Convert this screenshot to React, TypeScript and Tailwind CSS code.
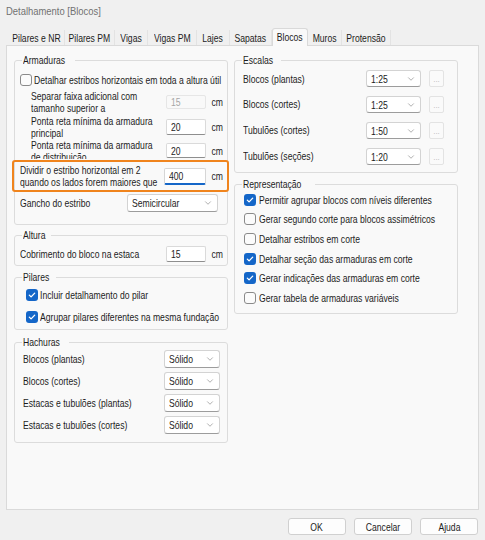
import { ChevronDown } from 'lucide-react';
import type { ReactNode } from 'react';

const tabs = [
  { label: 'Pilares e NR', w: 'w-[57px]' },
  { label: 'Pilares PM', w: 'w-[50px]' },
  { label: 'Vigas', w: 'w-[33px]' },
  { label: 'Vigas PM', w: 'w-[49px]' },
  { label: 'Lajes', w: 'w-[33px]' },
  { label: 'Sapatas', w: 'w-[42px]' },
  { label: 'Blocos', w: 'w-[36px]' },
  { label: 'Muros', w: 'w-[34px]' },
  { label: 'Protensão', w: 'w-[49px]' },
];

const escalas = [
  { label: 'Blocos (plantas)', value: '1:25', h: 'h-[25px]' },
  { label: 'Blocos (cortes)', value: '1:25', h: 'h-[26px]' },
  { label: 'Tubulões (cortes)', value: '1:50', h: 'h-[26px]' },
  { label: 'Tubulões (seções)', value: '1:20', h: 'h-[26px]' },
];

const representacao = [
  { label: 'Permitir agrupar blocos com níveis diferentes', on: true },
  { label: 'Gerar segundo corte para blocos assimétricos', on: false },
  { label: 'Detalhar estribos em corte', on: false },
  { label: 'Detalhar seção das armaduras em corte', on: true },
  { label: 'Gerar indicações das armaduras em corte', on: true },
  { label: 'Gerar tabela de armaduras variáveis', on: false },
];

const hachuras = ['Blocos (plantas)', 'Blocos (cortes)', 'Estacas e tubulões (plantas)', 'Estacas e tubulões (cortes)'];

// texto estreito, no estilo da fonte do diálogo
function T({ children, className = 'origin-left' }: { children: ReactNode; className?: string }) {
  return <span className={`inline-block scale-x-[0.82] ${className}`}>{children}</span>;
}

function CheckBox({ on = false }: { on?: boolean }) {
  if (on) {
    return (
      <span className="w-[12px] h-[12px] shrink-0 rounded-[3px] bg-[#1466c8] flex items-center justify-center">
        <svg width="8" height="8" viewBox="0 0 8 8">
          <path d="M1.3 4.1 3.1 5.9 6.7 2.1" fill="none" stroke="#fff" strokeWidth="1.3" strokeLinecap="round" strokeLinejoin="round" />
        </svg>
      </span>
    );
  }
  return <span className="w-[12px] h-[12px] shrink-0 rounded-[3px] border border-[#8a8a8a] bg-[#fbfbfb]" />;
}

function Combo({ value, className = '' }: { value: string; className?: string }) {
  return (
    <div className={`flex items-center justify-between shrink-0 bg-white border border-[#d3d3d3] border-b-[#9c9c9c] rounded-[3px] pl-[4px] pr-[4px] ${className}`}>
      <T>{value}</T>
      <ChevronDown size={10} strokeWidth={1.3} className="text-[#6c6c6c]" />
    </div>
  );
}

function Field({ value, className = '', disabled = false }: { value: string; className?: string; disabled?: boolean }) {
  return (
    <div
      className={`flex items-center shrink-0 pl-[4px] rounded-[2px] border ${
        disabled ? 'bg-[#f9f9f9] border-[#e6e6e6] text-[#a5a5a5]' : 'bg-white border-[#dadada] border-b-[#8e8e8e]'
      } ${className}`}
    >
      <T>{value}</T>
    </div>
  );
}

function Cm({ className = '' }: { className?: string }) {
  return (
    <span className={`w-[17px] shrink-0 text-right ${className}`}>
      <T className="origin-right">cm</T>
    </span>
  );
}

function Group({ title, className = '', children }: { title: string; className?: string; children: ReactNode }) {
  return (
    <fieldset className={`min-w-0 border border-[#dcdcdc] rounded-[3px] ${className}`}>
      <legend className="ml-[7px] px-[1px] leading-[12px]">
        <T>{title}</T>
      </legend>
      {children}
    </fieldset>
  );
}

export default function App() {
  return (
    <div className="w-[485px] h-[540px] overflow-hidden flex flex-col whitespace-nowrap bg-[#f0f0f0] text-[#1c1c1c] text-[10.5px] leading-[12px] font-['Liberation_Sans',Arial,sans-serif]">
      <div className="h-[28px] pl-[6px] pt-[4px] text-[11.5px] leading-[14px] text-[#727272]">
        <T>Detalhamento [Blocos]</T>
      </div>

      {/* abas */}
      <div className="h-[17px] flex items-end pl-[8px]">
        {tabs.map((t) =>
          t.label === 'Blocos' ? (
            <div
              key={t.label}
              className={`${t.w} h-[18px] -mb-[1px] relative z-10 flex items-center justify-center pb-[2px] bg-[#f9f9f9] border border-b-0 border-[#d9d9d9] rounded-t-[3px]`}
            >
              <T className="origin-center">{t.label}</T>
            </div>
          ) : (
            <div key={t.label} className={`${t.w} h-[15px] flex items-center justify-center border-r border-[#e3e3e3]`}>
              <T className="origin-center">{t.label}</T>
            </div>
          )
        )}
      </div>

      <div className="mx-[6px] h-[465px] flex gap-[6px] pl-[7px] pt-[8px] bg-[#f9f9f9] border border-[#dadada]">
        {/* coluna esquerda */}
        <div className="w-[214px] shrink-0 flex flex-col">
          <Group title="Armaduras" className="pt-[4px] pb-[10px]">
            <div className="h-[19px] flex items-center gap-[2px] pl-[5px]">
              <CheckBox />
              <T>Detalhar estribos horizontais em toda a altura útil</T>
            </div>
            <div className="h-[25px] flex items-center pl-[16px] pr-[4px]">
              <span className="flex-1 min-w-0">
                <T>Separar faixa adicional com<br />tamanho superior a</T>
              </span>
              <Field value="15" disabled className="w-[40px] h-[14px]" />
              <Cm />
            </div>
            <div className="h-[25px] flex items-center pl-[16px] pr-[4px]">
              <span className="flex-1 min-w-0">
                <T>Ponta reta mínima da armadura<br />principal</T>
              </span>
              <Field value="20" className="w-[40px] h-[16px]" />
              <Cm />
            </div>
            <div className="h-[21px] flex items-center pl-[16px] pr-[4px]">
              <span className="flex-1 min-w-0 self-start h-[20px] overflow-hidden">
                <T>Ponta reta mínima da armadura<br />de distribuição</T>
              </span>
              <Field value="20" className="w-[40px] h-[15px] mt-[2px]" />
              <Cm className="mt-[2px]" />
            </div>
            <div className="h-[32px] -ml-[3px] -mr-[2px] flex items-center pl-[6px] pr-[4px] border-2 border-[#f0841d] rounded-[3px]">
              <span className="flex-1 min-w-0">
                <T>Dividir o estribo horizontal em 2<br />quando os lados forem maiores que</T>
              </span>
              <div className="w-[42px] h-[17px] shrink-0 flex items-center pl-[4px] bg-white border border-[#d6d6d6] border-b-2 border-b-[#1466c8] rounded-[2px]">
                <T>400</T>
              </div>
              <Cm />
            </div>
            <div className="h-[22px] flex items-center pl-[5px] pr-[9px]">
              <span className="flex-1 min-w-0">
                <T>Gancho do estribo</T>
              </span>
              <Combo value="Semicircular" className="w-[91px] h-[18px]" />
            </div>
          </Group>

          <Group title="Altura" className="mt-[4px] pt-[3px] pb-[1px]">
            <div className="h-[20px] flex items-center pl-[5px] pr-[4px]">
              <span className="flex-1 min-w-0">
                <T>Cobrimento do bloco na estaca</T>
              </span>
              <Field value="15" className="w-[40px] h-[16px]" />
              <Cm />
            </div>
          </Group>

          <Group title="Pilares" className="mt-[5px] pt-[1px] pb-[1px]">
            <div className="h-[22px] flex items-center gap-[2px] pl-[11px]">
              <CheckBox on />
              <T>Incluir detalhamento do pilar</T>
            </div>
            <div className="h-[22px] flex items-center gap-[2px] pl-[11px]">
              <CheckBox on />
              <T>Agrupar pilares diferentes na mesma fundação</T>
            </div>
          </Group>

          <Group title="Hachuras" className="mt-[6px] pb-[6px]">
            {hachuras.map((h) => (
              <div key={h} className="h-[22px] flex items-center pl-[8px] pr-[7px]">
                <span className="flex-1 min-w-0">
                  <T>{h}</T>
                </span>
                <Combo value="Sólido" className="w-[56px] h-[18px]" />
              </div>
            ))}
          </Group>
        </div>

        {/* coluna direita */}
        <div className="w-[224px] shrink-0 flex flex-col">
          <Group title="Escalas" className="pb-[3px]">
            {escalas.map((e) => (
              <div key={e.label} className={`${e.h} flex items-end pb-[4px] pl-[8px] pr-[13px]`}>
                <span className="flex-1 min-w-0 self-center mt-[4px]">
                  <T>{e.label}</T>
                </span>
                <Combo value={e.value} className="w-[55px] h-[17px]" />
                <div className="ml-[8px] w-[15px] h-[17px] shrink-0 flex items-end justify-center pb-[2px] border border-[#e3e3e3] rounded-[2px] bg-[#fafafa] text-[#b5b5b5] text-[8px] leading-[8px]">
                  ...
                </div>
              </div>
            ))}
          </Group>

          <Group title="Representação" className="mt-[5px] pb-[5px]">
            {representacao.map((r) => (
              <div key={r.label} className="h-[19.6px] flex items-center gap-[3px] pl-[9px]">
                <CheckBox on={r.on} />
                <T>{r.label}</T>
              </div>
            ))}
          </Group>
        </div>
      </div>

      <div className="flex justify-end gap-[8px] pr-[7px] pt-[8px]">
        {['OK', 'Cancelar', 'Ajuda'].map((b) => (
          <button key={b} className="w-[58px] h-[17px] flex items-center justify-center bg-[#fdfdfd] border border-[#d0d0d0] rounded-[3px]">
            <T className="origin-center">{b}</T>
          </button>
        ))}
      </div>
    </div>
  );
}
